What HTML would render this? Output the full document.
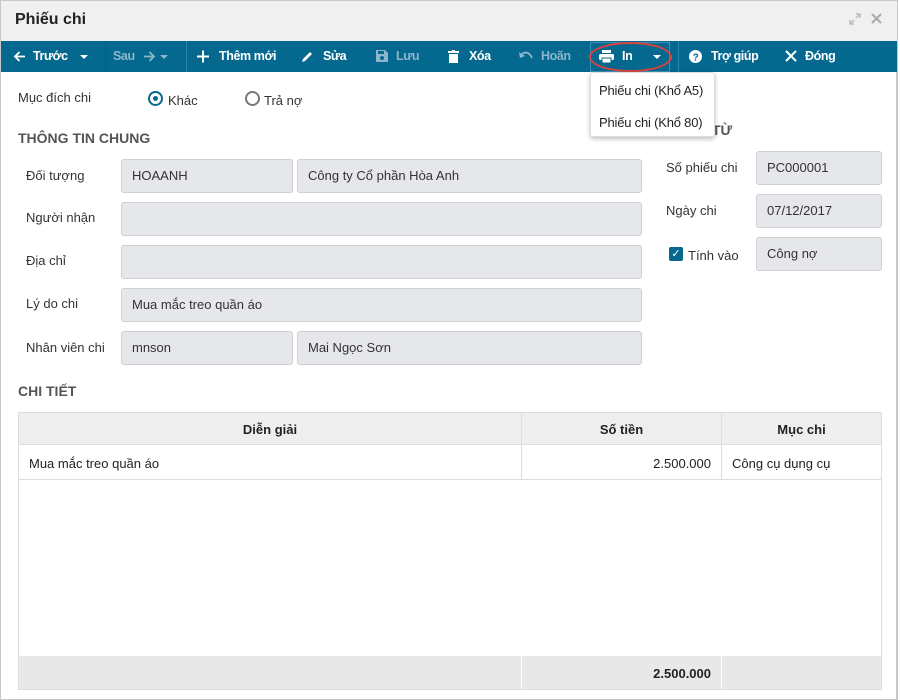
<!DOCTYPE html><html><head><meta charset="utf-8"><style>
*{box-sizing:border-box}body{margin:0;width:900px;height:700px;overflow:hidden;font-family:"Liberation Sans",sans-serif;font-size:13px;color:#222;background:#fff;position:relative}
.a{position:absolute}
.frame{left:0;top:0;width:898px;height:700px;border:1px solid #c8c8c8;border-right:2px solid #c8c8c8}
.tb{left:1px;top:41px;width:896px;height:31px;background:#05698f}
.btn{position:absolute;top:0;height:31px;line-height:31px;color:#fff;font-size:12.5px;font-weight:bold;white-space:nowrap;letter-spacing:-0.4px}
.btn svg{position:absolute;top:9px;left:0}
.dis{color:#8cb6cb}
.car{position:absolute;top:14px;width:0;height:0;border-left:4px solid transparent;border-right:4px solid transparent;border-top:4px solid #fff}
.inp{position:absolute;height:34px;background:#e6e7ea;border:1px solid #cfd0d3;border-radius:3px;padding:0 10px;line-height:32px;font-size:13px;color:#333}
.lbl{position:absolute;font-size:13px;color:#333}
.sec{position:absolute;font-weight:bold;font-size:14px;color:#555}
</style></head><body>
<div class="a frame"></div>
<div class="a" style="left:1px;top:1px;width:896px;height:40px;background:#f0f0f0"></div>
<div class="a" style="left:15px;top:11px;font-size:16px;font-weight:bold;color:#222">Phiếu chi</div>
<svg class="a" style="left:849px;top:13px" width="12" height="12" viewBox="0 0 12 12"><path d="M7 1h4v4M11 1L7 5M5 11H1V7M1 11l4-4" stroke="#bbb" stroke-width="1.5" fill="none"/></svg>
<svg class="a" style="left:871px;top:13px" width="11" height="11" viewBox="0 0 11 11"><path d="M1 1l9 9M10 1l-9 9" stroke="#aaa" stroke-width="2"/></svg>
<div class="a tb">
<div class="btn" style="left:12px;padding-left:20px"><svg width="13" height="13" viewBox="0 0 13 13"><path d="M12 6.5H2M6.5 2L2 6.5 6.5 11" stroke="#fff" stroke-width="1.8" fill="none"/></svg>Trước</div><div class="car" style="left:79px"></div>
<div class="a" style="left:104px;top:0;width:1px;height:31px;background:#0b5c7e"></div>
<div class="btn dis" style="left:112px;padding-right:20px">Sau<svg style="left:30px" width="13" height="13" viewBox="0 0 13 13"><path d="M1 6.5h10M6.5 2L11 6.5 6.5 11" stroke="#8cb6cb" stroke-width="1.8" fill="none"/></svg></div><div class="car" style="left:159px;border-top-color:#8cb6cb"></div>
<div class="a" style="left:185px;top:0;width:1px;height:31px;background:#2e84a8"></div>
<div class="btn" style="left:196px;padding-left:22px"><svg width="12" height="13" viewBox="0 0 12 12"><path d="M6 0v12M0 6h12" stroke="#fff" stroke-width="2"/></svg>Thêm mới</div>
<div class="btn" style="left:300px;padding-left:22px"><svg width="13" height="13" viewBox="0 0 13 13"><path d="M1 12l1-3 7-7 2 2-7 7z" fill="#fff"/></svg>Sửa</div>
<div class="btn dis" style="left:375px;padding-left:20px"><svg width="12" height="12" viewBox="0 0 12 12"><path d="M0 0h9l3 3v9H0z" fill="#8cb6cb"/><rect x="2" y="1" width="6" height="3" fill="#05698f"/><circle cx="6" cy="8" r="2" fill="#05698f"/></svg>Lưu</div>
<div class="btn" style="left:447px;padding-left:21px"><svg width="11" height="13" viewBox="0 0 11 13"><path d="M0 1h11v2H0zM1 4h9v9H1z" fill="#fff"/><rect x="4" y="0" width="3" height="1" fill="#fff"/></svg>Xóa</div>
<div class="btn dis" style="left:518px;padding-left:22px"><svg width="14" height="12" viewBox="0 0 14 12"><path d="M3 4c4-3 8-1 10 4" stroke="#8cb6cb" stroke-width="1.8" fill="none"/><path d="M0 2l1 6 5-2z" fill="#8cb6cb"/></svg>Hoãn</div>
<div class="a" style="left:589px;top:1px;width:80px;height:30px;border:1px solid #3b8fb7"></div>
<div class="a" style="left:588px;top:1px;width:83px;height:30px;border:2px solid #d9433c;border-radius:50%"></div>
<div class="btn" style="left:598px;padding-left:23px"><svg width="15" height="13" viewBox="0 0 15 13"><rect x="3" y="0" width="9" height="3" fill="#fff"/><rect x="0" y="4" width="15" height="6" rx="1.5" fill="#fff"/><rect x="3" y="8" width="9" height="5" fill="#fff" stroke="#05698f"/></svg>In</div><div class="car" style="left:652px"></div>
<div class="a" style="left:677px;top:0;width:1px;height:31px;background:#2e84a8"></div>
<div class="btn" style="left:688px;padding-left:22px"><svg width="13" height="13" viewBox="0 0 13 13"><circle cx="6.5" cy="6.5" r="6.5" fill="#fff"/><text x="6.5" y="10.5" font-size="10" font-weight="bold" text-anchor="middle" fill="#05698f" font-family="Liberation Sans">?</text></svg>Trợ giúp</div>
<div class="btn" style="left:784px;padding-left:20px"><svg width="12" height="12" viewBox="0 0 12 12"><path d="M1 1l10 10M11 1L1 11" stroke="#fff" stroke-width="2"/></svg>Đóng</div>
</div>
<div class="lbl" style="left:18px;top:90px">Mục đích chi</div>
<div class="a" style="left:148px;top:91px;width:15px;height:15px;border:2px solid #05698f;border-radius:50%"><div class="a" style="left:3px;top:3px;width:5px;height:5px;background:#05698f;border-radius:50%"></div></div>
<div class="lbl" style="left:168px;top:93px">Khác</div>
<div class="a" style="left:245px;top:91px;width:15px;height:15px;border:2px solid #777;border-radius:50%"></div>
<div class="lbl" style="left:264px;top:93px">Trả nợ</div>
<div class="sec" style="left:18px;top:130px">THÔNG TIN CHUNG</div>
<div class="sec" style="left:712px;top:122px">TỪ</div>
<div class="lbl" style="left:26px;top:168px">Đối tượng</div>
<div class="inp" style="left:121px;top:159px;width:172px">HOAANH</div>
<div class="inp" style="left:297px;top:159px;width:345px">Công ty Cổ phần Hòa Anh</div>
<div class="lbl" style="left:26px;top:210px">Người nhận</div>
<div class="inp" style="left:121px;top:202px;width:521px"></div>
<div class="lbl" style="left:26px;top:253px">Địa chỉ</div>
<div class="inp" style="left:121px;top:245px;width:521px"></div>
<div class="lbl" style="left:26px;top:296px">Lý do chi</div>
<div class="inp" style="left:121px;top:288px;width:521px">Mua mắc treo quần áo</div>
<div class="lbl" style="left:26px;top:340px">Nhân viên chi</div>
<div class="inp" style="left:121px;top:331px;width:172px">mnson</div>
<div class="inp" style="left:297px;top:331px;width:345px">Mai Ngọc Sơn</div>
<div class="lbl" style="left:666px;top:160px">Số phiếu chi</div>
<div class="inp" style="left:756px;top:151px;width:126px">PC000001</div>
<div class="lbl" style="left:666px;top:203px">Ngày chi</div>
<div class="inp" style="left:756px;top:194px;width:126px">07/12/2017</div>
<div class="a" style="left:669px;top:247px;width:14px;height:14px;background:#05698f;border-radius:2px;color:#fff;font-size:11px;line-height:14px;text-align:center">✓</div>
<div class="lbl" style="left:688px;top:248px">Tính vào</div>
<div class="inp" style="left:756px;top:237px;width:126px">Công nợ</div>
<div class="sec" style="left:18px;top:383px">CHI TIẾT</div>
<div class="a" style="left:18px;top:412px;width:864px;height:278px;border:1px solid #ddd"></div>
<div class="a" style="left:19px;top:413px;width:862px;height:32px;background:#eeeeee;border-bottom:1px solid #ddd"></div>
<div class="a" style="left:19px;top:656px;width:862px;height:33px;background:#e8e8e8"></div>
<div class="a" style="left:521px;top:413px;width:1px;height:66px;background:#ddd"></div>
<div class="a" style="left:721px;top:413px;width:1px;height:66px;background:#ddd"></div>
<div class="a" style="left:521px;top:656px;width:1px;height:33px;background:#fff"></div>
<div class="a" style="left:721px;top:656px;width:1px;height:33px;background:#fff"></div>
<div class="a" style="left:19px;top:479px;width:862px;height:1px;background:#ddd"></div>
<div class="a" style="left:19px;top:422px;width:502px;text-align:center;font-weight:bold">Diễn giải</div>
<div class="a" style="left:522px;top:422px;width:199px;text-align:center;font-weight:bold">Số tiền</div>
<div class="a" style="left:722px;top:422px;width:159px;text-align:center;font-weight:bold">Mục chi</div>
<div class="a" style="left:29px;top:456px">Mua mắc treo quần áo</div>
<div class="a" style="left:522px;top:456px;width:189px;text-align:right">2.500.000</div>
<div class="a" style="left:732px;top:456px">Công cụ dụng cụ</div>
<div class="a" style="left:522px;top:666px;width:189px;text-align:right;font-weight:bold">2.500.000</div>
<div class="a" style="left:590px;top:72px;width:125px;height:65px;background:#fff;border:1px solid #ddd;border-radius:3px;box-shadow:0 2px 5px rgba(0,0,0,.25)">
<div class="a" style="left:8px;top:10px;white-space:nowrap;letter-spacing:-0.2px">Phiếu chi (Khổ A5)</div>
<div class="a" style="left:8px;top:42px;white-space:nowrap;letter-spacing:-0.2px">Phiếu chi (Khổ 80)</div></div>
</body></html>
